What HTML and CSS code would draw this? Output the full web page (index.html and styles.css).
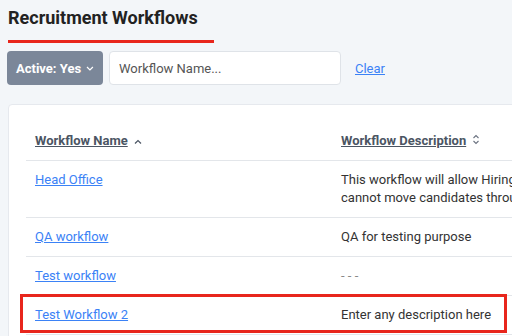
FILE: index.html
```html
<!DOCTYPE html>
<html lang="en">
<head>
    <meta charset="UTF-8">
    <meta name="viewport" content="width=device-width, initial-scale=1.0">
    <title>Recruitment Workflows</title>
    <link rel="stylesheet" href="styles.css">
</head>
<body>
    <div class="page">
        <!-- page title -->
        <h1 class="page-title">Recruitment Workflows</h1>

        <!-- filters -->
        <div class="filter-bar">
            <button class="filter-btn">Active: Yes
                <svg class="caret" width="8" height="5" viewBox="0 0 8 5"><path d="M1 1l3 3 3-3" fill="none" stroke="#fff" stroke-width="1.2"/></svg>
            </button>
            <input type="text" class="search-input" placeholder="Workflow Name...">
            <a href="#" class="clear-link">Clear</a>
        </div>

        <!-- workflow table -->
        <div class="card">
            <table class="workflow-table">
                <thead>
                    <tr>
                        <th class="col-name"><a href="#">Workflow Name</a>
                            <svg class="sort" width="8" height="6" viewBox="0 0 8 6"><path d="M1 4.5l3-3 3 3" fill="none" stroke="#4b5563" stroke-width="1.2"/></svg>
                        </th>
                        <th><a href="#">Workflow Description</a>
                            <svg class="sort" width="8" height="11" viewBox="0 0 8 11"><path d="M1.5 4l2.5-2.5 2.5 2.5M1.5 7l2.5 2.5 2.5-2.5" fill="none" stroke="#6b7280" stroke-width="1.1"/></svg>
                        </th>
                    </tr>
                </thead>
                <tbody>
                    <tr>
                        <td><a href="#">Head Office</a></td>
                        <td>This workflow will allow Hiring Managers to view candidates, but they<br>cannot move candidates through the stages of the pipeline.</td>
                    </tr>
                    <tr>
                        <td><a href="#">QA workflow</a></td>
                        <td>QA for testing purpose</td>
                    </tr>
                    <tr>
                        <td><a href="#">Test workflow</a></td>
                        <td class="empty">- - -</td>
                    </tr>
                    <tr>
                        <td><a href="#">Test Workflow 2</a></td>
                        <td>Enter any description here</td>
                    </tr>
                </tbody>
            </table>
            <div class="highlight"></div>
        </div>
    </div>
</body>
</html>
```

FILE: styles.css
```css
html, body {
    margin: 0;
    padding: 0;
    overflow: hidden;
}

body {
    font-family: Roboto, "Liberation Sans", Arial, sans-serif;
    background: #f3f6f9;
    color: #333;
    width: 512px;
}

.page {
    padding: 7px 0 0 8px;
}

.page-title {
    display: inline-block;
    margin: 0;
    padding: 0 16px 12px 0;
    font-size: 18px;
    line-height: 21px;
    font-weight: bold;
    color: #222;
    border-bottom: 3px solid #e8261c;
}

.filter-bar {
    display: flex;
    align-items: center;
    margin: 8px 0 0 -1px;
}

.filter-btn {
    display: flex;
    align-items: center;
    gap: 5px;
    height: 34px;
    width: 96px;
    padding: 0 9px;
    background: #7b8799;
    color: #fff;
    font-family: inherit;
    font-size: 13px;
    font-weight: bold;
    white-space: nowrap;
    border: none;
    border-radius: 4px;
}

.search-input {
    box-sizing: border-box;
    height: 34px;
    width: 232px;
    margin-left: 6px;
    padding: 0 9px;
    font-family: inherit;
    font-size: 13px;
    background: #fff;
    border: 1px solid #dfe3e8;
    border-radius: 4px;
}

.search-input::placeholder {
    color: #555;
}

.clear-link {
    margin-left: 14px;
    font-size: 13px;
    color: #3b82f6;
}

.card {
    position: relative;
    margin-top: 19px;
    width: 680px;
    padding: 17px 17px;
    background: #fff;
    border: 1px solid #e6e9ee;
    border-radius: 4px;
}

.workflow-table {
    border-collapse: collapse;
    table-layout: fixed;
    width: 100%;
    font-size: 13px;
}

.workflow-table th,
.workflow-table td {
    text-align: left;
    padding: 10px 9px;
    line-height: 18px;
    border-bottom: 1px solid #e3e6ea;
    white-space: nowrap;
    vertical-align: top;
}

.workflow-table th {
    font-weight: bold;
}

.workflow-table th a {
    color: #4b5563;
}

.workflow-table .col-name {
    width: 288px;
}

.workflow-table td a {
    color: #3b82f6;
}

.workflow-table .sort {
    margin-left: 3px;
}

.workflow-table .empty {
    color: #888;
}

.highlight {
    position: absolute;
    left: 11px;
    top: 189px;
    width: 481px;
    height: 33px;
    border: 3px solid #e8261c;
}
```
